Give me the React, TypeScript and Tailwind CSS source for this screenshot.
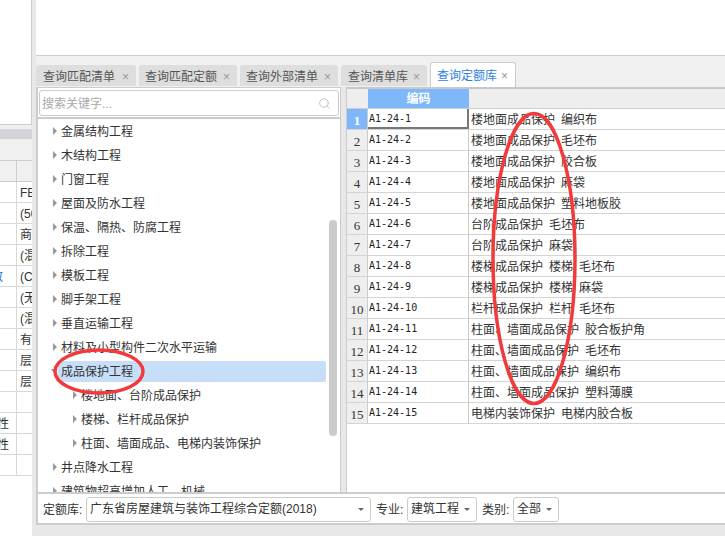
import { Search } from 'lucide-react';

const tabs = [
  { label: '查询匹配清单', className: 'w-[100px] pl-[7px]' },
  { label: '查询匹配定额', className: 'w-[98px] pl-[6px]' },
  { label: '查询外部清单', className: 'w-[98px] pl-[6px]' },
  { label: '查询清单库', className: 'w-[86px] pl-[7px]' },
];

const tree = [
  { label: '金属结构工程' },
  { label: '木结构工程' },
  { label: '门窗工程' },
  { label: '屋面及防水工程' },
  { label: '保温、隔热、防腐工程' },
  { label: '拆除工程' },
  { label: '模板工程' },
  { label: '脚手架工程' },
  { label: '垂直运输工程' },
  { label: '材料及小型构件二次水平运输' },
  { label: '成品保护工程', open: true },
  { label: '楼地面、台阶成品保护', child: true },
  { label: '楼梯、栏杆成品保护', child: true },
  { label: '柱面、墙面成品、电梯内装饰保护', child: true },
  { label: '井点降水工程' },
  { label: '建筑物超高增加人工、机械' },
];

const rows = [
  '楼地面成品保护 编织布',
  '楼地面成品保护 毛坯布',
  '楼地面成品保护 胶合板',
  '楼地面成品保护 麻袋',
  '楼地面成品保护 塑料地板胶',
  '台阶成品保护 毛坯布',
  '台阶成品保护 麻袋',
  '楼梯成品保护 楼梯 毛坯布',
  '楼梯成品保护 楼梯 麻袋',
  '栏杆成品保护 栏杆 毛坯布',
  '柱面、墙面成品保护 胶合板护角',
  '柱面、墙面成品保护 毛坯布',
  '柱面、墙面成品保护 编织布',
  '柱面、墙面成品保护 塑料薄膜',
  '电梯内装饰保护 电梯内胶合板',
];

const leftRows = [
  ['', 'FBXX'],
  ['', '(50'],
  ['', '商品'],
  ['', '(混'],
  ['数', '(C'],
  ['', '(无'],
  ['', '(混'],
  ['', '有'],
  ['', '层'],
  ['', '层'],
  ['', ''],
  ['性', ''],
  ['性', ''],
  ['', ''],
];

function Select({ label, className }: { label: string; className: string }) {
  return (
    <div className={`flex h-[25px] items-center justify-between rounded-[3px] border border-[#ccc] pr-[6px] pl-[3px] ${className}`}>
      <span className="truncate">{label}</span>
      <span className="shrink-0 border-x-[3px] border-t-[3px] border-x-transparent border-t-[#666]" />
    </div>
  );
}

export default function App() {
  return (
    <div className="relative flex h-[536px] w-[725px] overflow-hidden bg-[#e8e8e8] font-['Liberation_Sans','Noto_Sans_CJK_SC',sans-serif] text-[12px] text-[#333]">
      <div className="flex w-[32px] shrink-0 flex-col bg-white">
        <div className="h-[125px] shrink-0 border-r border-b border-[#ccc]" />
        <div className="h-[4px] shrink-0 bg-[#efefef]" />
        <div className="h-[10px] shrink-0 bg-[#d3d4da]" />
        <div className="h-[21px] shrink-0 bg-[#f0f0f0]" />
        <div className="flex h-[22px] shrink-0 border-y border-[#ccc] bg-[#f0f0f0]">
          <div className="w-[17px] border-r border-[#ccc]" />
        </div>
        {leftRows.map((r, i) => (
          <div key={i} className="flex h-[21px] shrink-0 overflow-hidden border-b border-[#d8d8d8] leading-[22px]">
            <div className="flex w-[17px] shrink-0 justify-end overflow-hidden border-r border-[#d8d8d8]">
              <span className={r[0] === '性' ? 'mr-[7px] shrink-0' : 'mr-[13px] shrink-0 text-[#0a66d8]'}>{r[0]}</span>
            </div>
            <div className="overflow-hidden pl-[3px] whitespace-nowrap">{r[1]}</div>
          </div>
        ))}
      </div>

      <div className="ml-[4px] flex h-full w-[689px] shrink-0 flex-col">
        <div className="h-[56px] shrink-0 border-b border-[#ccc] bg-white" />

        <div className="flex h-[31px] shrink-0 items-end gap-[3px] bg-[#f0f0f0]">
          {tabs.map((t) => (
            <div key={t.label} className={`mb-px flex h-[21px] items-center justify-between rounded-t-[3px] bg-[#dedede] pt-[2px] pr-[7px] text-[#555] ${t.className}`}>
              <span>{t.label}</span>
              <span className="text-[12px] text-[#999]">×</span>
            </div>
          ))}
          <div className="flex h-[25px] w-[86px] items-center justify-between rounded-t-[3px] border border-b-0 border-[#ccc] bg-white pt-[1px] pr-[7px] pl-[6px] text-[#2f7fe0]">
            <span>查询定额库</span>
            <span className="text-[12px] text-[#999]">×</span>
          </div>
        </div>

        <div className="flex h-[405px] shrink-0">
          <div className="flex w-[305px] shrink-0 flex-col border-t border-r border-l-2 border-[#ccc] bg-white">
            <div className="flex h-[31px] shrink-0 items-start border-b-2 border-[#ccc] pt-[2px] pr-[1px] pl-[1px]">
              <div className="flex h-[26px] flex-1 items-center justify-between rounded-[3px] border border-[#ccc] pt-[1px] pr-[7px] pl-[2px] text-[#aaa]">
                <span>搜索关键字...</span>
                <Search size={13} strokeWidth={1.6} className="text-[#bbb]" />
              </div>
            </div>
            <div className="relative flex-1 overflow-hidden">
              {tree.map((n) => (
                <div key={n.label} className={`flex h-[24px] items-center whitespace-nowrap ${n.child ? 'pl-[35px]' : 'pl-[15px]'}`}>
                  {n.open ? (
                    <>
                      <span className="-ml-[2px] shrink-0 border-x-[3px] border-t-[4px] border-x-transparent border-t-[#999]" />
                      <span className="mt-px ml-[1px] flex h-[21px] w-[268px] shrink-0 items-center rounded-[2px] bg-[#c7def8] pt-px pl-[3px]">{n.label}</span>
                    </>
                  ) : (
                    <>
                      <span className="mr-[4px] shrink-0 border-y-[4px] border-l-[4px] border-y-transparent border-l-[#999]" />
                      <span className="pt-[2px]">{n.label}</span>
                    </>
                  )}
                </div>
              ))}
              <div className="absolute top-[101px] right-[3px] h-[216px] w-[8px] rounded-[4px] bg-[#cbcbcb]" />
            </div>
          </div>

          <div className="ml-[5px] flex-1 overflow-hidden border-l border-[#ccc] bg-white">
            <div className="flex h-[22px] border-t-2 border-b border-t-[#c8c8c8] border-b-[#ccc] bg-[#eee]">
              <div className="w-[21px]" />
              <div className="flex w-[101px] items-center justify-center bg-[#7fb8fa] font-bold text-white">编码</div>
            </div>
            {rows.map((r, i) => (
              <div key={i} className="flex h-[21px] border-b border-[#d4d4d4] whitespace-pre">
                <div className={`flex w-[21px] items-center justify-center border-r border-[#ccc] pt-[3px] font-['Liberation_Serif',serif] text-[13px] ${i === 0 ? 'bg-[#7fb8fa] font-bold text-white' : 'bg-[#eee]'}`}>
                  {i + 1}
                </div>
                <div className={`w-[101px] border-r border-[#ccc] pl-[1px] font-['DejaVu_Sans_Mono',monospace] text-[10px] leading-[20px] text-[#222] ${i === 0 ? 'border-r-2 border-b-2 border-r-[#777] border-b-[#777]' : ''}`}>
                  {`A1-24-${i + 1}`}
                </div>
                <div className="pl-[2px] leading-[22px] [word-spacing:2.7px]">{r}</div>
              </div>
            ))}
          </div>
        </div>

        <div className="flex h-[33px] shrink-0 items-center border-y-2 border-l-2 border-[#ccc] bg-white pt-[1px] pl-[5px]">
          <span className="w-[43px] pt-[2px]">定额库:</span>
          <Select label="广东省房屋建筑与装饰工程综合定额(2018)" className="w-[285px]" />
          <span className="ml-[5px] w-[31px] pt-[2px]">专业:</span>
          <Select label="建筑工程" className="w-[70px]" />
          <span className="ml-[5px] w-[31px] pt-[2px]">类别:</span>
          <Select label="全部" className="w-[46px]" />
        </div>
      </div>

      <svg className="pointer-events-none absolute inset-0" width="725" height="536" fill="none" stroke="#f23a3a" strokeWidth="3.5">
        <ellipse cx="99" cy="371.5" rx="44" ry="21.5" />
        <ellipse cx="534" cy="258.5" rx="41" ry="145" />
      </svg>
    </div>
  );
}
